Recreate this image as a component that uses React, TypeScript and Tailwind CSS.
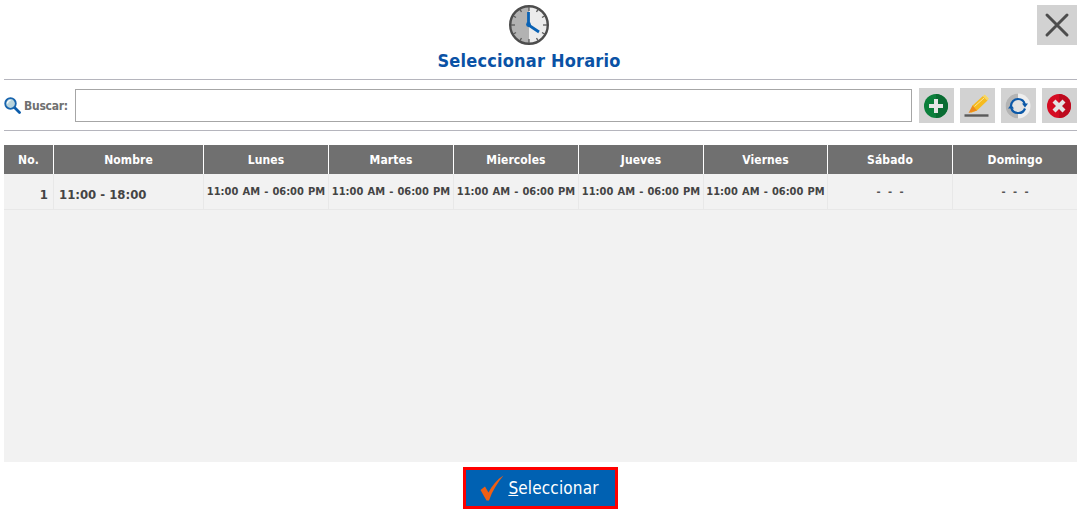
const columns = [
  { label: "No.", w: "w-[49px]" },
  { label: "Nombre", w: "w-[150px]" },
  { label: "Lunes", w: "w-[125px]" },
  { label: "Martes", w: "w-[125px]" },
  { label: "Miercoles", w: "w-[125px]" },
  { label: "Jueves", w: "w-[125px]" },
  { label: "Viernes", w: "w-[124px]" },
  { label: "Sábado", w: "w-[125px]" },
  { label: "Domingo", w: "flex-1" },
];

const days = [
  { text: "11:00 AM - 06:00 PM", w: "w-[125px]", extra: "[word-spacing:0.7px]" },
  { text: "11:00 AM - 06:00 PM", w: "w-[125px]", extra: "[word-spacing:0.7px]" },
  { text: "11:00 AM - 06:00 PM", w: "w-[125px]", extra: "[word-spacing:0.7px]" },
  { text: "11:00 AM - 06:00 PM", w: "w-[125px]", extra: "[word-spacing:0.7px]" },
  { text: "11:00 AM - 06:00 PM", w: "w-[124px]", extra: "[word-spacing:0.7px]" },
  { text: "- - -", w: "w-[125px]", extra: "[word-spacing:4px] text-[#555555]" },
  { text: "- - -", w: "flex-1", extra: "[word-spacing:4px] text-[#555555]" },
];

function Clock() {
  return (
    <svg width="42" height="42" viewBox="0 0 42 42">
      <circle cx="21" cy="21" r="19" fill="#ececec" />
      <path d="M21 2a19 19 0 0 0 0 38z" fill="#b2b2b2" />
      <circle cx="21" cy="21" r="18.8" fill="none" stroke="#4d4d4d" strokeWidth="2.4" />
      {Array.from({ length: 12 }).map((_, i) => (
        <line key={i} x1="21" y1="3" x2="21" y2={i % 3 === 0 ? "7" : "6"} stroke="#5a5a5a" strokeWidth="1.3" transform={`rotate(${i * 30} 21 21)`} />
      ))}
      <path d="M20.500 8v13l10.500 7" fill="none" stroke="#0a62b4" strokeWidth="2.800" />
      <circle cx="20.500" cy="20.500" r="2.400" fill="#0a62b4" />
    </svg>
  );
}

function Search() {
  return (
    <svg width="17" height="17" viewBox="0 0 17 17">
      <path d="M10.500 10.500l5 5" stroke="#0b5cab" strokeWidth="2.800" strokeLinecap="round" />
      <circle cx="6.500" cy="6.500" r="5.300" fill="#b9d4dc" stroke="#1763ad" strokeWidth="1.800" />
      <path d="M3.500 6.500a3 3 0 0 1 3-3" stroke="#ffffff" strokeWidth="1.200" fill="none" />
    </svg>
  );
}

function Plus() {
  return (
    <svg width="24" height="24" viewBox="0 0 24 24">
      <circle cx="12" cy="12" r="12" fill="#0b7f3b" />
      <path d="M12 0a12 12 0 0 1 0 24z" fill="#0a6c33" />
      <path d="M10 5h4v5h5v4h-5v5h-4v-5H5v-4h5z" fill="#e6e6e6" />
    </svg>
  );
}

function Pencil() {
  return (
    <svg width="26" height="26" viewBox="0 0 26 26">
      <path d="M0.500 22.500h24" stroke="#5a5a5a" strokeWidth="2.400" />
      <path d="M8.500 12.500L19 3l4.500 4.500L13 17.500l-6.500 2.500z" fill="#f6bb1f" />
      <path d="M19 3l1.800-1.500 4 4-1.300 2z" fill="#f9d860" />
      <path d="M8.500 12.500l4.500 5-8.500 2.500z" fill="#ee8a1c" />
      <path d="M10.500 13.500l9.500-8.500" stroke="#fbe39a" strokeWidth="1" />
    </svg>
  );
}

function Refresh() {
  return (
    <svg width="26" height="26" viewBox="0 0 26 26">
      <circle cx="13" cy="13" r="12.500" fill="#eeeeee" />
      <path d="M13 0.500a12.500 12.500 0 0 0 0 25z" fill="#b4b4b4" />
      <circle cx="13" cy="13" r="7" fill="#e2e2e2" />
      <path d="M13 6a7 7 0 0 0-7 7" fill="none" stroke="#0b58a8" strokeWidth="2.200" />
      <path d="M13 6a7 7 0 0 1 6.800 5.500" fill="none" stroke="#0b58a8" strokeWidth="2.200" />
      <path d="M13 20a7 7 0 0 0 7-4.500" fill="none" stroke="#0b58a8" strokeWidth="2.200" />
      <path d="M13 20a7 7 0 0 1-6.800-5.500" fill="none" stroke="#0b58a8" strokeWidth="2.200" />
      <path d="M17 10.500h6l-3 4zM3 15.500h6l-3-4z" fill="#0b58a8" />
    </svg>
  );
}

function Remove() {
  return (
    <svg width="24" height="24" viewBox="0 0 24 24">
      <circle cx="12" cy="12" r="12" fill="#d50b22" />
      <path d="M12 0a12 12 0 0 1 0 24z" fill="#bd0a1e" />
      <path d="M8.500 5.500L12 9l3.500-3.500 3 3L15 12l3.500 3.500-3 3L12 15l-3.500 3.500-3-3L9 12 5.500 8.500z" fill="#e4e4e4" />
    </svg>
  );
}

function Check() {
  return (
    <svg width="24" height="26" viewBox="0 0 24 26">
      <path d="M0.500 15L5 11.500l3.500 6C12 10.500 17 4.500 23.500 0.500 17.500 7.500 12.500 15.500 9 25.500H6.500z" fill="#ef5f14" />
    </svg>
  );
}

function ToolButton({ children }: { children: React.ReactNode }) {
  return <button className="w-[35px] h-[35px] pr-[1px] bg-[#d2d2d2] flex items-center justify-center">{children}</button>;
}

export default function App() {
  return (
    <div className="font-['DejaVu_Sans_Condensed','DejaVu_Sans',sans-serif] [font-stretch:condensed] w-[1077px] h-[511px] bg-white overflow-hidden flex flex-col pl-1">
      <header className="relative h-[80px] border-b border-[#b5b5bd] flex flex-col items-center pr-[23px]">
        <div className="mt-1">
          <Clock />
        </div>
        <h1 className="mt-[4px] text-[18px] leading-[21px] font-bold tracking-[0.2px] text-[#0a52a5]">Seleccionar Horario</h1>
        <button className="absolute right-0 top-[5px] w-10 h-10 bg-[#d2d2d2] flex items-center justify-center">
          <svg width="26" height="26" viewBox="0 0 26 26">
            <path d="M3 3l20 20M23 3L3 23" stroke="#4d4d4d" strokeWidth="3" strokeLinecap="round" />
          </svg>
        </button>
      </header>

      <div className="h-[51px] border-b border-[#b5b5bd] flex items-start pt-2">
        <div className="h-[35px] flex items-center">
          <Search />
          <span className="ml-[3px] text-[12px] font-bold tracking-[-0.25px] text-[#707070] w-[51px]">Buscar:</span>
        </div>
        <input className="mt-[1px] w-[837px] h-[33px] border border-[#a6a6a6] bg-white outline-none" />
        <div className="ml-[7px] flex gap-[6px]">
          <ToolButton><Plus /></ToolButton>
          <ToolButton><Pencil /></ToolButton>
          <ToolButton><Refresh /></ToolButton>
          <ToolButton><Remove /></ToolButton>
        </div>
      </div>

      <div className="mt-[14px] h-[317px] bg-[#f2f2f2] flex flex-col">
        <div className="flex h-[29px] bg-[#707070]">
          {columns.map((c, i) => (
            <div key={c.label} className={`${c.w} ${i ? "border-l border-white" : ""} flex items-center justify-center text-[12px] font-bold tracking-[0.1px] text-white`}>
              {c.label}
            </div>
          ))}
        </div>
        <div className="flex h-[36px] border-b border-[#e8e8e8] text-[#444444] font-bold">
          <div className="w-[49px] flex items-center justify-end pr-[5px] pt-[7px] text-[13px]">1</div>
          <div className="w-[150px] border-l border-[#e8e8e8] flex items-center pl-[5px] pt-[7px] text-[13px]">11:00 - 18:00</div>
          {days.map((d, i) => (
            <div key={i} className={`${d.w} ${d.extra} border-l border-[#e8e8e8] flex justify-center pt-[11px] text-[11px] leading-[14px] whitespace-pre overflow-hidden`}>
              {d.text}
            </div>
          ))}
        </div>
      </div>

      <div className="flex justify-center">
        <button className="mt-[5px] w-[155px] h-[42px] pr-[2px] bg-[#0061b2] border-[3px] border-[#ff0000] flex items-center justify-center gap-[4px] text-white text-[17px] tracking-[0.15px]">
          <Check />
          <span className="pt-[2px]"><span className="underline">S</span>eleccionar</span>
        </button>
      </div>
    </div>
  );
}
